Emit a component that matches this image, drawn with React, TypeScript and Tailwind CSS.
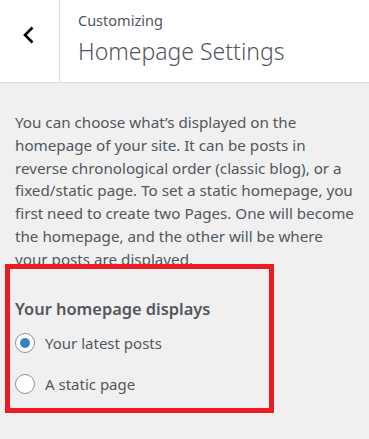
export default function App() {
  return (
    <div className="w-[369px] h-[439px] bg-[#f0f0f0] font-['Segoe_UI','Noto_Sans',sans-serif] text-[#50575e] overflow-hidden">
      <div className="flex h-[83px] bg-white border-b border-[#dcdcde]">
        <button className="w-[60px] shrink-0 flex items-center justify-center border-r border-[#dcdcde]">
          <svg width="14" height="20" viewBox="0 0 14 20" className="-mt-[12px] -ml-[1px]">
            <path d="M10.5 2.5 L3 10 L10.5 17.5" fill="none" stroke="#000" strokeWidth="2.6" />
          </svg>
        </button>
        <div className="pl-[18px] pt-[10px]">
          <div className="text-[14.5px] leading-[20px]">Customizing</div>
          <h2 className="text-[23px] leading-[34px] font-light mt-[4px]">Homepage Settings</h2>
        </div>
      </div>

      <div className="relative px-[15px] pt-[28px]">
        <p className="text-[15.2px] leading-[22.75px]">
          You can choose what’s displayed on the
          <br />
          homepage of your site. It can be posts in
          <br />
          reverse chronological order (classic blog), or a
          <br />
          fixed/static page. To set a static homepage, you
          <br />
          first need to create two Pages. One will become
          <br />
          the homepage, and the other will be where
          <br />
          your posts are displayed.
        </p>

        <div className="mt-[27px] text-[16.4px] leading-[24px] font-semibold">Your homepage displays</div>
        <div className="mt-[12px] flex flex-col gap-[21px]">
          <label className="flex items-center gap-[10px] text-[15px] leading-[20px]">
            <span className="w-[20px] h-[20px] rounded-full border border-[#8c8f94] bg-white flex items-center justify-center">
              <span className="w-[10px] h-[10px] rounded-full bg-[#3582c4]" />
            </span>
            Your latest posts
          </label>
          <label className="flex items-center gap-[10px] text-[15px] leading-[20px]">
            <span className="w-[20px] h-[20px] rounded-full border border-[#8c8f94] bg-white" />
            A static page
          </label>
        </div>

        <div className="absolute left-[5px] top-[181px] w-[269px] h-[149px] border-[5px] border-[#ed1c24] pointer-events-none" />
      </div>
    </div>
  );
}
